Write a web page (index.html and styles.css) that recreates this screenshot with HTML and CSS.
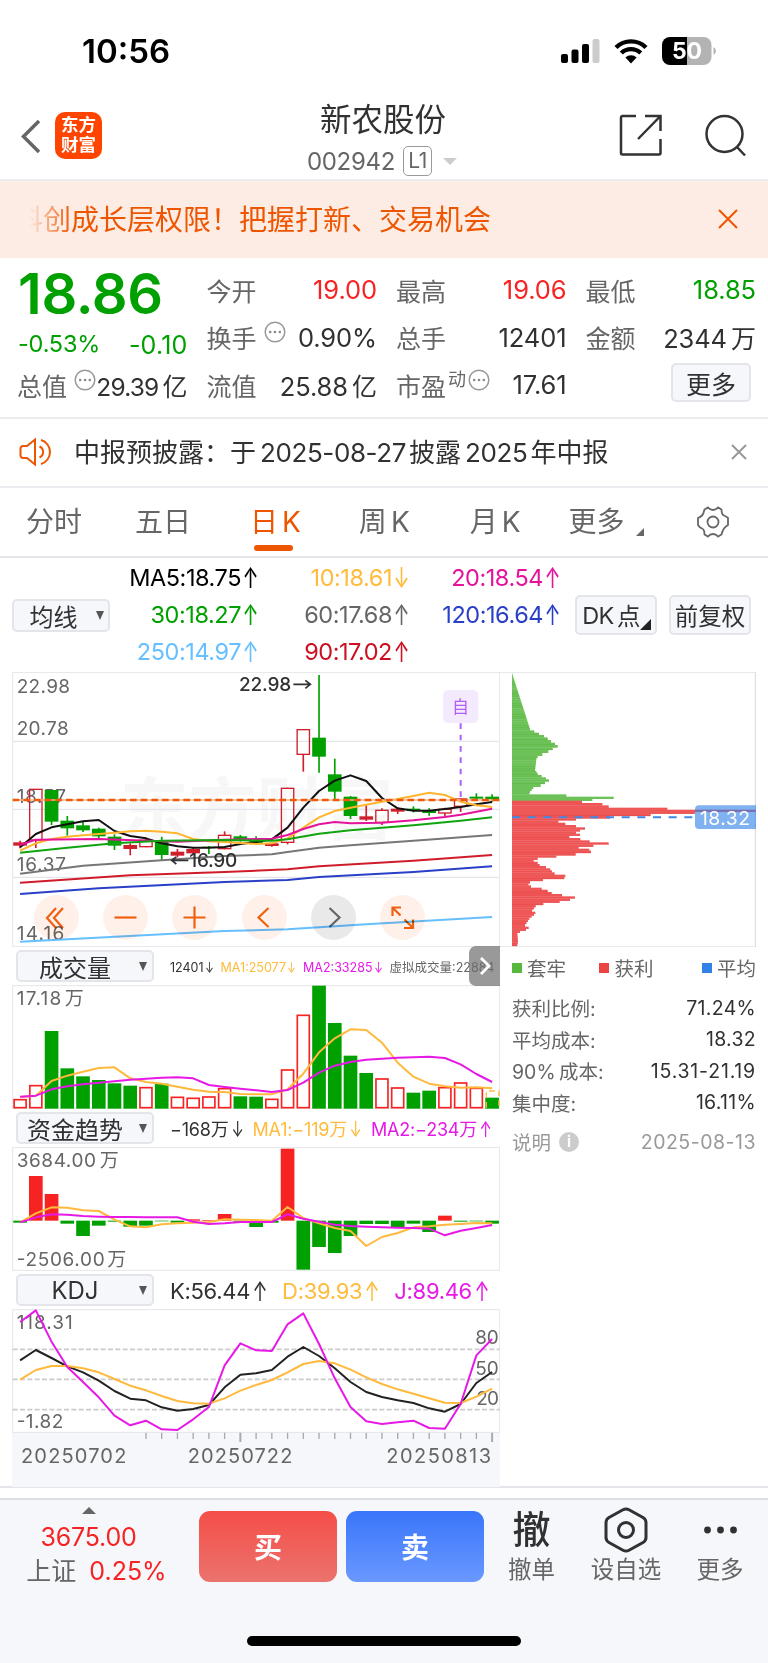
FILE: index.html
```html
<!DOCTYPE html>
<html lang="zh-CN">
<head>
    <meta charset="UTF-8">
    <meta name="viewport" content="width=device-width, initial-scale=1.0">
    <title>新农股份 002942</title>
    <link rel="stylesheet" href="styles.css">
</head>
<body>

<header class="status-bar">
    <div class="time">10:56</div>
    <div class="status-icons">
        <svg class="signal" width="39" height="25" viewBox="0 0 39 25">
            <rect x="0" y="15" width="7" height="9" rx="2"/>
            <rect x="10.5" y="10.5" width="7" height="13.5" rx="2"/>
            <rect x="21" y="5" width="7" height="19" rx="2"/>
            <rect x="31.5" y="0" width="7" height="24" rx="2" fill="#ccc"/>
        </svg>
        <svg class="wifi" width="34" height="25" viewBox="0 0 34 25">
            <path d="M2 8.5a21.5 21.5 0 0 1 30 0M7.3 14a14 14 0 0 1 19.4 0" fill="none" stroke="#000" stroke-width="4.4"/>
            <path d="M17 24.5l-5.6-6a8 8 0 0 1 11.2 0z"/>
        </svg>
        <svg class="battery" width="54" height="28" viewBox="0 0 54 28">
            <path d="M8 0H25V28H8a8 8 0 0 1-8-8V8a8 8 0 0 1 8-8z"/>
            <path d="M25 0H41.500a8 8 0 0 1 8 8V20a8 8 0 0 1-8 8H25z" fill="#b3b3b3"/>
            <path d="M51.500 10a4.500 4.500 0 0 1 0 8z" fill="#b3b3b3"/>
            <text x="25" y="22" text-anchor="middle">50</text>
        </svg>
    </div>
</header>

<nav class="nav">
    <svg class="back" width="20" height="35" viewBox="0 0 20 35"><path d="M18 2L2.500 17.500L18 33"/></svg>
    <div class="logo"><span>东方</span><span>财富</span></div>
    <div class="nav-title">
        <h1>新农股份</h1>
        <div class="code">002942 <span class="level">L1</span><i class="caret"></i></div>
    </div>
    <svg class="nav-icon" width="44" height="44" viewBox="0 0 44 44">
        <path d="M17 3H3.500a1.500 1.500 0 0 0-1.500 1.500V40a1.500 1.500 0 0 0 1.500 1.500H40a1.500 1.500 0 0 0 1.500-1.500V26M26 3H41.500V18M41.500 3L19 26"/>
    </svg>
    <svg class="nav-icon" width="44" height="44" viewBox="0 0 44 44">
        <circle cx="20.500" cy="21" r="18"/><path d="M33 34L41 42.500"/>
    </svg>
</nav>

<div class="banner">
    <div class="marquee">科创成长层权限！把握打新、交易机会</div>
    <svg width="20" height="20" viewBox="0 0 20 20"><path d="M1 1L19 19M19 1L1 19"/></svg>
</div>

<section class="quote">
    <div class="quote-col">
        <div class="price green">18.86</div>
        <div class="change green"><span>-0.53%</span><span class="diff">-0.10</span></div>
        <div class="cell cap"><label>总值</label><svg class="dots"><use href="#dots"/></svg><b>29.39<i>亿</i></b></div>
    </div>
    <div class="quote-col">
        <div class="cell"><label>今开</label><b class="red">19.00</b></div>
        <div class="cell"><label>换手</label><svg class="dots gap"><use href="#dots"/></svg><b>0.90%</b></div>
        <div class="cell"><label>流值</label><b>25.88<i>亿</i></b></div>
    </div>
    <div class="quote-col">
        <div class="cell"><label>最高</label><b class="red">19.06</b></div>
        <div class="cell"><label>总手</label><b>12401</b></div>
        <div class="cell"><label>市盈<sup>动</sup></label><svg class="dots"><use href="#dots"/></svg><b>17.61</b></div>
    </div>
    <div class="quote-col">
        <div class="cell"><label>最低</label><b class="green">18.85</b></div>
        <div class="cell"><label>金额</label><b>2344<i>万</i></b></div>
        <div class="cell"><button class="btn more">更多</button></div>
    </div>
</section>

<div class="notice">
    <svg class="horn" width="34" height="30" viewBox="0 0 34 30">
        <path d="M16 2.500V27.500L8 21H4a2.500 2.500 0 0 1-2.500-2.500V11.500a2.500 2.500 0 0 1 2.500-2.500H8ZM20.500 9.500a6 6 0 0 1 0 11M22 3a12.500 12.500 0 0 1 0 24"/>
    </svg>
    <p>中报预披露：于<span>2025-08-27</span>披露<span>2025</span>年中报</p>
    <svg class="notice-close" width="16" height="16" viewBox="0 0 16 16"><path d="M1 1L15 15M15 1L1 15"/></svg>
</div>

<div class="tabs">
    <div class="tab">分时</div>
    <div class="tab">五日</div>
    <div class="tab active">日<span>K</span></div>
    <div class="tab">周<span>K</span></div>
    <div class="tab">月<span>K</span></div>
    <div class="tab tab-more">更多<i class="corner"></i></div>
    <svg class="gear" width="34" height="34" viewBox="0 0 34 34">
        <path d="M12 2.500Q14 5 17 5T22 2.500L25.500 4.500Q25.500 9.500 28 10.500T32 13V20Q29.500 21.500 28 23.500T25.500 29.500L22 31.500Q20 29 17 29T12 31.500L8.500 29.500Q8.500 24.500 6 23.500T2 20V13Q4.500 12 6 10.500T8.500 4.500Z"/>
        <circle cx="17" cy="17" r="5.500"/>
    </svg>
</div>

<section class="averages">
    <button class="btn select-ma">均线<i class="down"></i></button>
    <div class="ma-grid">
        <span class="ma5">MA5:18.75<u>↑</u></span><span class="ma10">10:18.61<u>↓</u></span><span class="ma20">20:18.54<u>↑</u></span>
        <span class="ma30">30:18.27<u>↑</u></span><span class="ma60">60:17.68<u>↑</u></span><span class="ma120">120:16.64<u>↑</u></span>
        <span class="ma250">250:14.97<u>↑</u></span><span class="ma90">90:17.02<u>↑</u></span>
    </div>
    <button class="btn tool">DK<span>点</span><i class="corner dark"></i></button>
    <button class="btn tool">前复权</button>
</section>

<main class="board">
    <div class="charts">
        <div class="kline">
            <svg id="kline" width="488" height="275" viewBox="36 21 1464 825"></svg>
            <div class="controls">
                <div class="ctl"><svg viewBox="0 0 45 45"><path d="M22 13L13 23L22 33M29 13L20 23L29 33"/></svg></div>
                <div class="ctl"><svg viewBox="0 0 45 45"><path d="M11.500 22.500H33.500"/></svg></div>
                <div class="ctl"><svg viewBox="0 0 45 45"><path d="M11.500 22.500H33.500M22.500 11.500V33.500"/></svg></div>
                <div class="ctl"><svg viewBox="0 0 45 45"><path d="M26.500 13L16.500 22.500L26.500 32"/></svg></div>
                <div class="ctl off"><svg viewBox="0 0 45 45"><path d="M18.500 13L28.500 22.500L18.500 32"/></svg></div>
                <div class="ctl"><svg viewBox="0 0 45 45"><path d="M12.500 21V12.500H21M13 13L20.500 20.500M33 24.500V33H24M32.500 32.500L24.500 24.500"/></svg></div>
            </div>
        </div>
        <div class="sub-head vol-head">
            <button class="btn select">成交量<i class="down"></i></button>
            <div class="figures tiny">
                <span>12401<u>↓</u></span><span class="yellow">MA1:25077<u>↓</u></span><span class="purple">MA2:33285<u>↓</u></span><span class="grey">虚拟成交量:22884</span>
            </div>
            <div class="next"><svg width="12" height="20" viewBox="0 0 12 20"><path d="M2 2L10 10L2 18"/></svg></div>
        </div>
        <svg id="volume" width="488" height="124" viewBox="36 120 1464 372"></svg>
        <div class="sub-head">
            <button class="btn select">资金趋势<i class="down"></i></button>
            <div class="figures mid">
                <span>−168万<u>↓</u></span><span class="yellow">MA1:−119万<u>↓</u></span><span class="purple">MA2:−234万<u>↑</u></span>
            </div>
        </div>
        <svg id="fund" width="488" height="124" viewBox="36 111 1464 372"></svg>
        <div class="sub-head">
            <button class="btn select">KDJ<i class="down"></i></button>
            <div class="figures big">
                <span>K:56.44<u>↑</u></span><span class="yellow">D:39.93<u>↑</u></span><span class="purple">J:89.46<u>↑</u></span>
            </div>
        </div>
        <svg id="kdj" width="488" height="178" viewBox="36 117 1464 534"></svg>
    </div>

    <aside class="chips">
        <svg id="chips" width="256" height="275" viewBox="0 21 768 825"></svg>
        <div class="legend">
            <span><i class="sq sq-green"></i>套牢</span><span><i class="sq sq-red"></i>获利</span><span><i class="sq sq-blue"></i>平均</span>
        </div>
        <div class="stat"><span>获利比例:</span><b>71.24%</b></div>
        <div class="stat"><span>平均成本:</span><b>18.32</b></div>
        <div class="stat"><span>90% 成本:</span><b class="range">15.31-21.19</b></div>
        <div class="stat"><span>集中度:</span><b>16.11%</b></div>
        <div class="stat note"><span>说明<i class="info">i</i></span><b>2025-08-13</b></div>
    </aside>
</main>

<footer class="bottom">
    <div class="actions">
        <div class="index">
            <i class="up"></i>
            <div class="red">3675.00</div>
            <div class="index-row"><span>上证</span><span class="red">0.25%</span></div>
        </div>
        <button class="trade buy">买</button>
        <button class="trade sell">卖</button>
        <div class="action"><div class="glyph">撤</div>撤单</div>
        <div class="action">
            <svg width="44" height="46" viewBox="0 0 44 46">
                <path d="M19 2.800Q22 1 25 2.800L39 10.500Q42 12.300 42 15.500V30.500Q42 33.700 39 35.500L25 43.200Q22 45 19 43.200L5 35.500Q2 33.700 2 30.500V15.500Q2 12.300 5 10.500Z"/>
                <circle cx="22" cy="23" r="7.500"/>
            </svg>
            设自选
        </div>
        <div class="action">
            <svg width="44" height="46" viewBox="0 0 44 46">
                <g class="solid"><circle cx="9.500" cy="23" r="3.400"/><circle cx="22.500" cy="23" r="3.400"/><circle cx="35.500" cy="23" r="3.400"/></g>
            </svg>
            更多
        </div>
    </div>
    <div class="home-bar"></div>
</footer>

<svg class="defs">
    <symbol id="dots" viewBox="0 0 22 22">
        <circle cx="11" cy="11" r="9.800" fill="none" stroke="#999" stroke-width="1.500"/>
        <circle cx="6.200" cy="11" r="1.300" fill="#888"/><circle cx="11" cy="11" r="1.300" fill="#888"/><circle cx="15.800" cy="11" r="1.300" fill="#888"/>
    </symbol>
</svg>

<script src="script.js"></script>
</body>
</html>
```
FILE: styles.css
```css
* {
    box-sizing: border-box;
}

body {
    margin: 0;
    width: 768px;
    height: 1663px;
    overflow: hidden;
    background: #fff;
    color: #303133;
    font-family: Inter, "Noto Sans CJK SC", sans-serif;
    font-size: 26px;
}

svg {
    display: block;
    flex: none;
}

i, b, u {
    font-style: normal;
    font-weight: 400;
    text-decoration: none;
}

button {
    font-family: inherit;
    color: inherit;
    padding: 0;
}

.red { color: #f72323; }
.green { color: #00a000; }
.yellow { color: #ffbb3c; }
.purple { color: #e619e6; }
.grey { color: #666; }

.defs {
    position: absolute;
    width: 0;
    height: 0;
}

/* status bar */
.status-bar {
    display: flex;
    justify-content: space-between;
    height: 92px;
    padding: 37px 52px 0 82px;
}

.time {
    font-size: 33px;
    line-height: 29px;
    font-weight: 600;
    color: #000;
}

.status-icons {
    display: flex;
}

.signal {
    margin: 2px 14px 0 0;
}

.wifi {
    margin: 2px 14px 0 0;
}

.battery text {
    font-size: 23px;
    font-weight: 700;
    fill: #fff;
}

/* title bar */
.nav {
    display: flex;
    align-items: flex-start;
    height: 89px;
    padding: 20px 20px 0 21px;
    border-bottom: 2px solid #ebecef;
}

.back {
    margin-top: 7px;
    fill: none;
    stroke: #666;
    stroke-width: 3.500;
}

.logo {
    width: 47px;
    height: 47px;
    margin-left: 14px;
    padding-top: 3px;
    border-radius: 10px;
    background: #ff4400;
    color: #fff;
    font-size: 17.5px;
    font-weight: 700;
    line-height: 20px;
    text-align: center;
}

.logo span {
    display: block;
}

.nav-title {
    width: 518px;
    margin-top: -12px;
}

.nav-title h1 {
    margin: 0 0 0 218px;
    font-size: 31.5px;
    font-weight: 400;
    line-height: 40px;
}

.code {
    display: flex;
    align-items: center;
    margin: 5px 0 0 205px;
    height: 32px;
    color: #666;
    font-size: 24px;
    letter-spacing: -0.3px;
}

.level {
    width: 29px;
    height: 30px;
    margin-left: 8px;
    border: 1.500px solid #999;
    border-radius: 5px;
    font-size: 21px;
    line-height: 27px;
    text-align: center;
}

.caret {
    margin-left: 11px;
    border: 7px solid transparent;
    border-top-color: #ccc;
    border-bottom: 0;
}

.nav-icon {
    margin-top: 1px;
    fill: none;
    stroke: #333;
    stroke-width: 2.500;
}

.nav-icon + .nav-icon {
    margin-left: 41px;
}

/* orange marquee */
.banner {
    display: flex;
    align-items: center;
    justify-content: space-between;
    height: 77px;
    padding: 0 30px 0 15px;
    background: #fdece4;
    color: #ee5500;
    font-size: 28px;
}

.marquee {
    padding-bottom: 4px;
    -webkit-mask-image: linear-gradient(90deg, transparent 14px, #000 58px);
    mask-image: linear-gradient(90deg, transparent 14px, #000 58px);
}

.banner svg {
    margin-top: -2px;
    stroke: #ee5500;
    stroke-width: 2;
}

/* quote */
.quote {
    display: flex;
    gap: 20px;
    height: 161px;
    padding: 0 12px 0 18px;
    border-bottom: 2px solid #ebecef;
}

.quote-col {
    width: 169.500px;
    padding-top: 8px;
}

.quote-col:first-child {
    padding-top: 0;
}

.price {
    height: 72px;
    line-height: 72px;
    font-size: 56px;
    font-weight: 600;
    letter-spacing: -0.3px;
}

.change {
    display: flex;
    justify-content: space-between;
    height: 31px;
    line-height: 28px;
    font-size: 23.5px;
    letter-spacing: -0.2px;
}

.diff {
    font-size: 25px;
    letter-spacing: 0.2px;
    line-height: 31px;
}

.cell {
    display: flex;
    align-items: center;
    height: 47.500px;
    white-space: nowrap;
}

.cell label {
    margin-left: -1px;
    color: #666;
    font-size: 25px;
}

.cell b {
    margin-left: auto;
    font-size: 25.5px;
    letter-spacing: -0.1px;
}

.cell i {
    margin-left: 4px;
    font-size: 25px;
    letter-spacing: 0;
}

.cap b {
    font-size: 24.5px;
    letter-spacing: -0.8px;
}

.cell sup {
    font-size: 18px;
    line-height: 0;
    margin-left: 2px;
}

.dots {
    width: 22px;
    height: 22px;
    margin: 0 0 10px 7px;
}

.dots.gap {
    margin-left: 7px;
}

label:has(sup) + .dots {
    margin-left: 2px;
}

.btn {
    display: flex;
    flex: none;
    align-items: center;
    justify-content: center;
    background: #f6f7fa;
    border: 2px solid #e3e5ea;
    border-radius: 5px;
    white-space: nowrap;
}

.more {
    width: 80px;
    height: 39px;
    margin: 0 5px 4px auto;
    font-size: 25px;
}

/* announcement */
.notice {
    display: flex;
    align-items: center;
    height: 69px;
    padding: 0 21px 0 19px;
    border-bottom: 2px solid #ebecef;
}

.notice p {
    margin: -4px 0 0 21px;
    font-size: 26px;
}

.notice p span {
    margin: 0 3px 0 4px;
    letter-spacing: -0.4px;
}

.horn {
    margin-top: -2px;
    fill: none;
    stroke: #ee5500;
    stroke-width: 2;
}

.notice-close {
    margin: -1px 0 0 auto;
    stroke: #999;
    stroke-width: 2;
}

/* period tabs */
.tabs {
    display: flex;
    align-items: center;
    height: 70px;
    padding: 0 38px 0 26px;
    border-bottom: 2px solid #e3e5ea;
    color: #666;
    font-size: 28px;
}

.tab {
    position: relative;
    height: 68px;
    line-height: 69px;
    margin-right: 53px;
    white-space: nowrap;
}

.tab span {
    margin-left: 4px;
}

.tab:nth-child(2) { margin-right: 59px; }
.tab:nth-child(3) { margin-right: 58px; }
.tab:nth-child(4) { margin-right: 60px; }
.tab:nth-child(5) { margin-right: 48px; }

.tab.active {
    color: #ee5500;
}

.tab.active::after {
    content: "";
    position: absolute;
    left: 4px;
    bottom: 5px;
    width: 39px;
    height: 6px;
    border-radius: 3px;
    background: #ee5500;
}

.tab-more {
    margin-right: 0;
}

.corner {
    display: inline-block;
    margin-left: 11px;
    border-left: 8px solid transparent;
    border-bottom: 8px solid #666;
}

.tab .corner {
    position: relative;
    top: 4px;
}

.gear {
    margin-left: auto;
    fill: none;
    stroke: #666;
    stroke-width: 1.800;
}

/* moving averages */
.averages {
    display: flex;
    align-items: center;
    height: 114px;
    padding: 0 16px 0 12px;
}

.select-ma {
    width: 98px;
    height: 33px;
    font-size: 24px;
    gap: 18px;
    padding-left: 11px;
}

.down {
    border: 4.500px solid transparent;
    border-top: 9px solid #555;
    border-bottom: 0;
}

.select-ma .down {
    margin-top: 1px;
}

.ma-grid {
    display: grid;
    grid-template-columns: 149px 151px 151px;
    grid-auto-rows: 37px;
    margin-top: -2px;
    line-height: 37px;
    font-size: 23.5px;
    text-align: right;
    letter-spacing: -0.45px;
}

.ma-grid u {
    width: 18px;
    text-align: left;
}

/* taller, narrower arrows than the font's own */
u {
    display: inline-block;
    text-align: center;
    transform: scale(0.82, 1.2);
}

.ma5 { color: #000; }
.ma10 { color: #ffbb3c; }
.ma20 { color: #e5129c; }
.ma30 { color: #00a000; }
.ma60 { color: #666; }
.ma120 { color: #2a3fc8; }
.ma250 { color: #66bfff; }
.ma90 { color: #cc1122; }

.tool {
    position: relative;
    width: 82px;
    height: 40px;
    margin-left: 12px;
    font-size: 23.5px;
}

.tool:nth-last-child(2) {
    margin-left: 14px;
    padding-right: 10px;
    letter-spacing: -0.5px;
}

.tool span {
    margin-left: 3px;
}

.corner.dark {
    position: absolute;
    right: 4px;
    bottom: 3px;
    border-left-width: 11px;
    border-bottom: 11px solid #222;
}

/* charts */
.board {
    display: flex;
    height: 816px;
    padding-left: 12px;
    border-bottom: 2px solid #e3e5ea;
}

.charts {
    width: 488px;
}

.kline {
    position: relative;
}

.controls {
    position: absolute;
    left: 22px;
    top: 223px;
    display: flex;
    gap: 24.200px;
    mix-blend-mode: multiply;
}

.ctl {
    width: 45px;
    height: 45px;
    border-radius: 50%;
    background: #fff0e9;
}

.ctl svg {
    fill: none;
    stroke: #f0600f;
    stroke-width: 2.200;
}

.ctl.off {
    background: #e9e9e9;
}

.ctl.off svg {
    stroke: #666;
}

.sub-head {
    position: relative;
    display: flex;
    align-items: center;
    height: 38px;
    padding-left: 4px;
}

.select {
    position: relative;
    width: 138px;
    height: 32px;
    padding-right: 20px;
    font-size: 24px;
}

.select .down {
    position: absolute;
    right: 5px;
    top: 10px;
}

.figures {
    display: flex;
    align-items: baseline;
    margin-left: 16px;
    white-space: nowrap;
}

.tiny { font-size: 12.5px; gap: 6px; }
.tiny u { width: 11px; }
.mid { font-size: 18px; gap: 7px; letter-spacing: -0.2px; }
.mid u { width: 17px; }
.big { font-size: 22px; gap: 12px; letter-spacing: -0.3px; padding-top: 1px; }
.big u { width: 20px; }

.next {
    position: absolute;
    right: 0;
    top: -1px;
    width: 31px;
    height: 40px;
    display: flex;
    align-items: center;
    justify-content: center;
    border-radius: 7px 0 0 7px;
    background: rgba(110, 110, 110, 0.7);
}

.next svg {
    fill: none;
    stroke: #fff;
    stroke-width: 2.800;
}

#kline text, #volume text, #fund text, #kdj text {
    fill: #666;
    font-size: 57px;
}

#kline .mark {
    fill: #303133;
    font-weight: 500;
}

#kline .watermark {
    fill: #f7f7f8;
    font-size: 205px;
    font-weight: 700;
}

#kline .own {
    fill: #b060f5;
    font-size: 51px;
}

#kdj .date {
    font-size: 60px;
}

#chips text {
    fill: #fff;
    font-size: 58px;
}

/* chip distribution */
.chips {
    width: 256px;
}

.legend {
    display: flex;
    justify-content: space-between;
    align-items: center;
    height: 41px;
    padding-left: 12px;
    color: #666;
    font-size: 19.5px;
}

.legend span {
    display: flex;
    align-items: center;
    gap: 5px;
}

.legend span:nth-child(2) {
    margin-right: 15px;
}

.sq {
    width: 10px;
    height: 10px;
}

.sq-green { background: #58b83e; }
.sq-red { background: #ea4545; }
.sq-blue { background: #3281e6; }

.stat {
    display: flex;
    justify-content: space-between;
    align-items: center;
    height: 31.500px;
    padding-left: 12px;
    font-size: 19.5px;
}

.legend + .stat {
    margin-top: 4px;
}

.stat span {
    color: #666;
    word-spacing: -2px;
}

.stat b {
    letter-spacing: 0.3px;
}

.stat .range {
    letter-spacing: 0.8px;
}

.stat.note {
    margin-top: 8px;
}

.stat.note span, .stat.note b {
    color: #999;
}

.note span {
    display: flex;
    align-items: center;
}

.note b {
    letter-spacing: 0.5px;
}

.info {
    width: 20px;
    height: 20px;
    margin-left: 8px;
    border-radius: 50%;
    background: #ccc;
    color: #fff;
    font-size: 15px;
    font-weight: 700;
    line-height: 20px;
    text-align: center;
}

/* bottom bar */
.bottom {
    height: 165px;
    margin-top: 10px;
    border-top: 2px solid #dcdee3;
    background: #f6f7fa;
}

.actions {
    display: flex;
    height: 90px;
}

.index {
    width: 177px;
    padding-top: 7px;
    font-size: 25px;
    line-height: 35px;
    text-align: center;
    letter-spacing: -0.2px;
}

.up {
    display: block;
    width: 14px;
    margin: 0 auto 6px;
    border: 7px solid transparent;
    border-bottom-color: #666;
    border-top: 0;
}

.index-row {
    display: flex;
    justify-content: center;
    gap: 13px;
    padding-left: 16px;
    color: #666;
    line-height: 33px;
    letter-spacing: 0;
}

.trade {
    width: 138px;
    height: 71px;
    margin: 11px 0 0 9px;
    padding-bottom: 2px;
    border: 0;
    border-radius: 11px;
    color: #fff;
    font-size: 28px;
    font-weight: 700;
}

.buy {
    margin-left: 22px;
    background: linear-gradient(#f54e48, #eb736e);
}

.sell {
    background: linear-gradient(#3a76fb, #6a98ff);
}

.action {
    display: flex;
    flex-direction: column;
    align-items: center;
    width: 94px;
    padding-top: 7px;
    color: #666;
    font-size: 23.5px;
    line-height: 34px;
}

.trade + .action {
    width: 95px;
}

.glyph {
    height: 46px;
    color: #303133;
    font-size: 38px;
    font-weight: 500;
    line-height: 45px;
}

.action svg {
    fill: none;
    stroke: #303133;
    stroke-width: 3;
}

.action .solid {
    fill: #303133;
    stroke: none;
}

.home-bar {
    width: 274px;
    height: 10px;
    margin: 46px auto 0;
    border-radius: 5px;
    background: #000;
}
```
FILE: script.js
```javascript
// all plots are drawn at 3 units per css pixel
const STEP = 47.2;
const FIRST = 60.3;
const GREEN = '#00a000';
const RED = '#cf1f2b';

const x = i => FIRST + STEP * i;

function line(points, color, width = 6) {
    return `<polyline points="${points.join(' ')}" fill="none" stroke="${color}" stroke-width="${width}" stroke-linejoin="round"/>`;
}

function series(values, color, width) {
    return line(values.map((y, i) => `${x(i)},${y}`), color, width);
}

function sparse(pairs, color) {
    return line(pairs.map(([i, y]) => `${x(i)},${y}`), color);
}

function rule(x1, y1, x2, y2, color = '#e3e5ea', width = 4, dash = '') {
    return `<line x1="${x1}" y1="${y1}" x2="${x2}" y2="${y2}" stroke="${color}" stroke-width="${width}" stroke-dasharray="${dash}"/>`;
}

function rect(x, y, w, h, fill, extra = '') {
    return `<rect x="${x}" y="${y}" width="${w}" height="${h}" fill="${fill}" ${extra}/>`;
}

function text(x, y, str, length, cls = '') {
    const fit = length ? `textLength="${length}"` : '';
    return `<text x="${x}" y="${y}" class="${cls}" ${fit}>${str}</text>`;
}

function frame(y, h) {
    return rect(38, y, 1461, h, 'none', 'stroke="#e3e5ea" stroke-width="3"');
}

function draw(id, parts) {
    document.getElementById(id).innerHTML = parts.join('');
}

// [type, high, bodyTop, bodyBottom, low], g = falling, r = rising, s = rising with a solid body
const candles = [
    ['s', 527, 532, 542, 550], ['r', 373, 373, 525, 549], ['g', 375, 375, 470, 480], ['g', 453, 467, 490, 512],
    ['g', 470, 481, 496, 501], ['g', 488, 491, 514, 522], ['g', 508, 515, 542, 555], ['s', 535, 540, 552, 571],
    ['r', 518, 526, 545, 547], ['g', 515, 530, 570, 585], ['s', 552, 560, 572, 577], ['s', 547, 552, 565, 568],
    ['g', 543, 545, 549, 567], ['r', 499, 511, 551, 553], ['g', 510, 514, 522, 530], ['g', 514, 522, 537, 540],
    ['s', 533, 535, 543, 545], ['r', 368, 370, 532, 538], ['r', 193, 194, 268, 320], ['g', 30, 218, 275, 323],
    ['g', 281, 328, 380, 402], ['g', 393, 395, 453, 462], ['s', 420, 454, 464, 468], ['r', 430, 436, 472, 480],
    ['s', 427, 431, 440, 447], ['g', 424, 431, 438, 442], ['g', 430, 436, 444, 452], ['r', 428, 433, 444, 454],
    ['r', 400, 402, 424, 441], ['g', 385, 395, 401, 407], ['g', 388, 395, 403, 410]
];

function candle([type, high, top, bottom, low], i) {
    const color = type === 'g' ? GREEN : RED;
    let out = '';
    if (type === 'r') {
        out += rule(x(i), high, x(i), top, color, 5) + rule(x(i), bottom, x(i), low, color, 5);
        out += rect(x(i) - 18.5, top, 37, bottom - top, 'none', `stroke="${color}" stroke-width="4"`);
    } else {
        out += rule(x(i), high, x(i), low, color, 5) + rect(x(i) - 20.5, top, 41, bottom - top, color);
    }
    return out;
}

const arrow = 'fill="none" stroke="#303133" stroke-width="5"';

draw('kline', [
    `<text class="watermark" x="360" y="508" textLength="820">东方财富</text>`,
    frame(22, 823),
    rule(38, 229, 1499, 229), rule(38, 433, 1499, 433), rule(38, 637, 1499, 637),
    text(50, 85, '22.98', 160), text(50, 210, '20.78', 156), text(50, 413, '18.57', 148),
    text(50, 617, '16.37', 148), text(50, 825, '14.16', 143),
    ...candles.map(candle),
    series([547, 507, 487, 478, 469, 465, 498, 513, 520, 535, 544, 548, 548, 546, 537, 531, 523, 488, 428, 378, 347, 331, 348, 399, 430, 437, 437, 432, 426, 418, 411], '#111'),
    series([557, 535, 522, 515, 511, 507, 503, 499, 497, 500, 505, 522, 529, 531, 534, 537, 535, 520, 488, 457, 438, 428, 419, 410, 402, 393, 383, 390, 410, 421, 426], '#ffb52e'),
    sparse([[0, 540], [1, 524], [5, 522], [10, 530], [13, 524], [16, 521], [17, 510], [18, 492], [19, 478], [20, 471], [21, 475], [23, 473], [25, 466], [27, 456], [28, 449], [30, 431]], '#e5129c'),
    sparse([[0, 563], [3, 548], [6, 535], [9, 527], [13, 525], [16, 527], [17, 523], [19, 506], [21, 496], [25, 481], [28, 467], [30, 457]], '#10a510'),
    sparse([[0, 626], [4, 602], [9, 586], [13, 573], [16, 568], [17, 561], [19, 548], [21, 541], [25, 527], [30, 510]], '#777'),
    sparse([[0, 653], [7, 631], [13, 621], [17, 613], [19, 604], [25, 587], [30, 570]], '#d01c2a'),
    sparse([[0, 687], [5, 670], [13, 651], [17, 645], [19, 636], [25, 621], [30, 604]], '#2a3fc8'),
    sparse([[0, 830], [13, 798], [17, 793], [22, 778], [30, 756]], '#66bfff'),
    rule(38, 405, 1499, 405, '#f9b48c', 4),
    rule(38, 405, 1499, 405, '#ee5a0a', 7, '20 12'),
    rule(1382, 175, 1382, 402, '#b060f5', 6, '17 17'),
    rect(1329, 75, 106, 99, '#f3eafd', 'rx="16"'),
    text(1356, 145, '自', 0, 'own'),
    text(717, 79, '22.98', 157, 'mark'),
    `<path d="M880 58H930M916 46L931 58L916 70" ${arrow}/>`,
    text(568, 607, '16.90', 144, 'mark'),
    `<path d="M565 586H516M529 576L515 586L529 597" ${arrow}/>`
]);

// volume bars: top edge, h = hollow red, g = green
const volume = 'h464 h422 g258 g370 g394 g405 g415 g422 h428 g416 h457 h460 h456 h431 g454 g455 h463 h375 h211 g122 g234 g332 g384 h402 h429 g443 g437 h428 h414 h430 g458'.split(' ');

function volumeBar(item, i) {
    const top = +item.slice(1);
    if (item[0] === 'g') return rect(x(i) - 20.5, top, 41, 491 - top, GREEN);
    return rect(x(i) - 18, top, 36, 488 - top, 'none', 'stroke="#f72323" stroke-width="5"');
}

draw('volume', [
    frame(122, 369),
    ...volume.map(volumeBar),
    `<path d="M1459 488V438H1497V488" fill="none" stroke="#ffbb3c" stroke-width="4" stroke-dasharray="17 12"/>`,
    text(50, 179, '17.18', 134), text(194, 179, '万'),
    series([456, 452, 408, 392, 380, 369, 367, 400, 411, 416, 425, 434, 440, 441, 447, 448, 448, 433, 386, 322, 280, 253, 255, 293, 353, 395, 416, 424, 428, 427, 430], '#ffb93c'),
    series([455, 452, 433, 424, 418, 413, 409, 404, 401, 398, 397, 400, 420, 426, 431, 436, 441, 435, 413, 383, 362, 351, 344, 341, 338, 337, 335, 339, 358, 387, 411], '#e619e6')
]);

// capital flow, measured from the zero line
const ZERO = 332;
const flow = [338, 198, 252, 341, 378, 347, 335, 350, 347, 334, 338, 328, 330, 312, 335, 351, 338, 116, 479, 411, 429, 378, 342, 342, 352, 341, 366, 317, 335, 334, 341];

draw('fund', [
    frame(113, 368),
    ...flow.map((y, i) => rect(x(i) - 20.5, Math.min(y, ZERO), 41, Math.abs(y - ZERO), y < ZERO ? '#f72323' : GREEN)),
    text(50, 170, '3684.00', 238), text(299, 170, '万'),
    text(50, 467, '-2506.00', 264), text(322, 467, '万'),
    series([337, 310, 292, 293, 301, 303, 329, 349, 352, 343, 340, 338, 336, 328, 329, 330, 332, 291, 324, 340, 354, 363, 408, 381, 369, 352, 349, 344, 342, 339, 340], '#ffb93c'),
    series([337, 322, 313, 314, 318, 320, 321, 321, 322, 322, 322, 335, 342, 340, 336, 336, 336, 313, 326, 335, 344, 348, 350, 352, 353, 354, 356, 376, 362, 354, 345], '#e619e6')
]);

const ticks = [];
for (let i = 8; i <= 30; i++) {
    const major = i === 14 || i === 30;
    ticks.push(rule(x(i), 488, x(i), major ? 516 : 507, '#aaa', major ? 6 : 4));
}

draw('kdj', [
    rect(36, 487, 1464, 164, '#f6f7fa'),
    frame(119, 368),
    ...[238, 328, 419].map(y => rule(38, y, 1499, y, '#ccc', 5, '15 7')),
    text(50, 176, '118.31', 168), text(50, 473, '-1.82', 140),
    text(1426, 223, '80', 70), text(1426, 314, '50', 70), text(1429, 404, '20', 68),
    series([271, 240, 264, 289, 307, 332, 363, 386, 391, 412, 422, 417, 405, 352, 314, 310, 300, 260, 231, 258, 295, 336, 366, 381, 391, 399, 415, 425, 402, 339, 306], '#222'),
    series([329, 300, 288, 288, 295, 307, 327, 347, 361, 378, 393, 400, 401, 385, 362, 345, 330, 307, 282, 273, 280, 299, 322, 342, 358, 371, 385, 398, 399, 380, 356], '#ffb93c'),
    series([156, 121, 215, 291, 336, 382, 437, 466, 452, 478, 480, 448, 411, 286, 220, 241, 243, 163, 130, 222, 325, 411, 454, 462, 457, 452, 474, 476, 402, 256, 207], '#e619e6'),
    ...ticks,
    text(63, 580, '20250702', 316, 'date'), text(563, 580, '20250722', 314, 'date'), text(1159, 580, '20250813', 314, 'date')
]);

// chip distribution outline: [y, right edge]
const outline = [
    [27, 37], [192, 90], [199, 103], [206, 117], [213, 132], [220, 143], [228, 153], [236, 165], [243, 173], [250, 158],
    [258, 145], [266, 127], [275, 113], [282, 109], [315, 105], [326, 113], [333, 125], [340, 138], [346, 147], [352, 135],
    [360, 122], [368, 100], [380, 90], [386, 88], [391, 199], [398, 341], [404, 277], [410, 246], [417, 307], [424, 326],
    [431, 502], [437, 767], [443, 585], [449, 452], [456, 330], [463, 228], [469, 175], [476, 196], [483, 228], [490, 255],
    [496, 240], [502, 228], [509, 240], [515, 208], [522, 241], [529, 269], [535, 326], [541, 280], [548, 236], [554, 268],
    [560, 273], [567, 227], [574, 169], [580, 113], [587, 101], [593, 113], [600, 119], [606, 138], [613, 151], [619, 156],
    [625, 164], [632, 196], [638, 193], [645, 129], [651, 90], [658, 85], [664, 93], [671, 125], [677, 143], [684, 155],
    [690, 186], [697, 225], [703, 210], [710, 179], [716, 130], [723, 107], [736, 96], [743, 106], [749, 102], [760, 88],
    [780, 75], [788, 86], [794, 78], [800, 60], [806, 52], [830, 54], [840, 52]
];

const bars = [];
outline.forEach(([y, right], n) => {
    const next = outline[n + 1] || [846, right];
    const rows = Math.max(1, Math.round((next[0] - y) / 6.5));
    const h = (next[0] - y) / rows;
    for (let k = 0; k < rows; k++) {
        const edge = right + (next[1] - right) * k / rows;
        const top = y + h * k - 3;
        const green = top < 406;
        bars.push(rect(36, top, edge - 36, h + 0.5, green ? '#6cc257' : '#f05656'));
        bars.push(rect(36, top + h - 1.5, edge - 36, 1.5, green ? '#5cb446' : '#e64a4a'));
    }
});

draw('chips', [
    rule(0, 22, 768, 22, '#e3e5ea', 3), rule(0, 845, 768, 845, '#e3e5ea', 3), rule(766, 22, 766, 845, '#d5d8e2', 3),
    ...bars,
    rule(36, 457, 585, 457, '#3f88e8', 6, '24 23'),
    '<path d="M768 421H597a12 12 0 0 0-12 12V480a12 12 0 0 0 12 12H768Z" fill="#3281e6" fill-opacity="0.62"/>',
    text(600, 479, '18.32', 150)
]);
```
